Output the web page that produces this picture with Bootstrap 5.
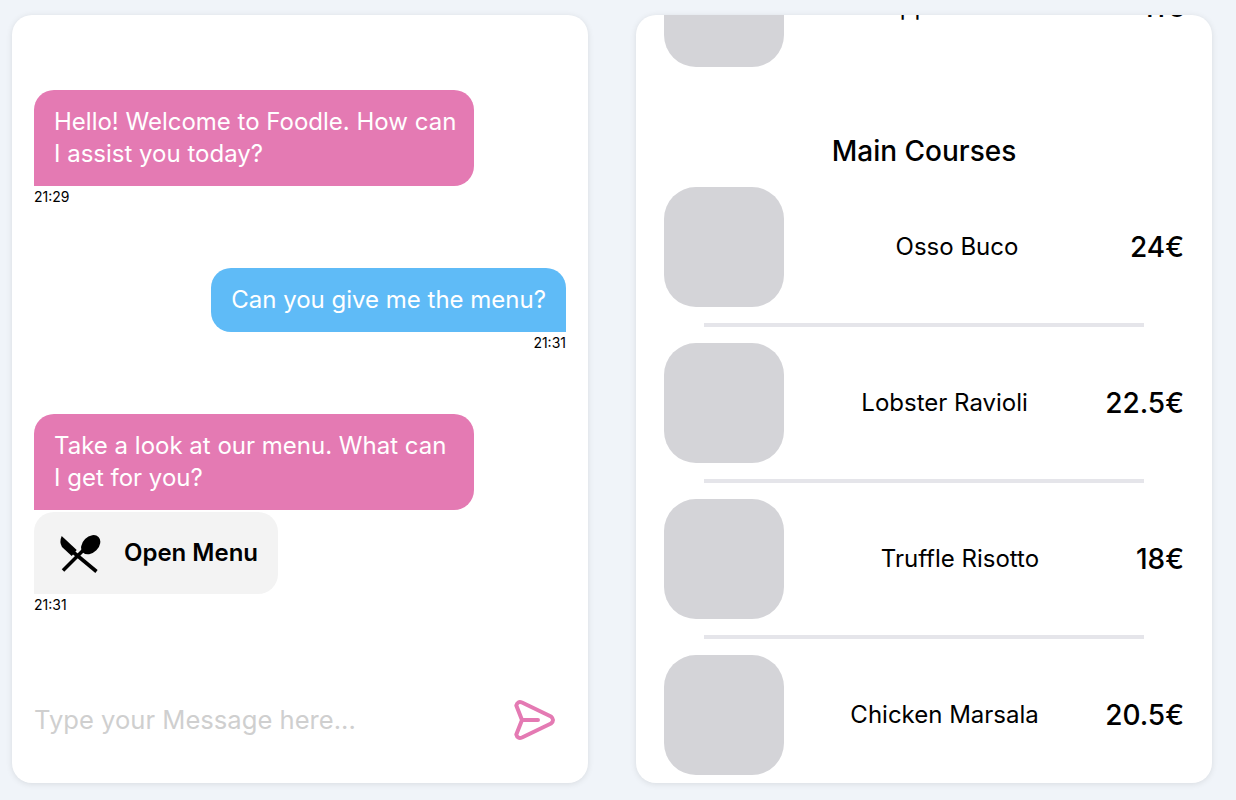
<!DOCTYPE html>
<html lang="en">
<head>
    <meta charset="UTF-8">
    <meta name="viewport" content="width=device-width, initial-scale=1.0">
    <title>Foodle</title>
    <link href="https://cdn.jsdelivr.net/npm/bootstrap@5.3.0/dist/css/bootstrap.min.css" rel="stylesheet">
    <style>
        body {
            background-color: #f0f4f9;
            font-family: Inter, "Liberation Sans", sans-serif;
            color: #000;
            height: 800px;
            overflow: hidden;
        }

        /* Two panels */
        .page-wrap {
            padding: 15px 24px 17px 12px;
            gap: 48px;
            height: 800px;
        }
        .panel {
            width: 576px;
            height: 768px;
            background: #fff;
            border-radius: 20px;
            box-shadow: 0 1px 6px rgba(0, 0, 0, 0.1);
            overflow: hidden;
        }

        /* Chat */
        .chat-list {
            padding: 75px 22px 0 22px;
        }
        .bubble {
            font-size: 24px;
            line-height: 32px;
            color: #fff;
            padding: 16px 20px;
            border-radius: 20px;
        }
        .bubble-bot {
            width: 440px;
            padding-right: 16px;
            background: #e47ab3;
            border-bottom-left-radius: 0;
        }
        .bubble-user {
            background: #5fbbf7;
            border-bottom-right-radius: 0;
        }
        .chat-time {
            font-size: 14px;
            line-height: 22px;
        }
        .chat-gap { margin-bottom: 60px; }
        .menu-btn {
            width: 244px;
            height: 82px;
            margin-top: 2px;
            padding: 0 20px 0 24px;
            gap: 22px;
            background: #f3f3f3;
            border-radius: 20px 20px 20px 0;
            font-size: 24px;
            font-weight: 600;
        }
        .msg-row {
            height: 96px;
            padding: 0 32px 0 22px;
            margin-top: auto;
            margin-bottom: 15px;
        }
        .msg-input {
            border: 0;
            outline: 0;
            padding: 0;
            font-size: 25.6px;
            font-family: inherit;
            color: #000;
            background: transparent;
        }
        .msg-input::placeholder {
            color: #cfcfcf;
            opacity: 1;
        }

        /* Menu */
        .menu-scroll {
            height: 100%;
            overflow: hidden;
            padding: 0 28px;
        }
        .menu-title {
            font-size: 28px;
            line-height: 40px;
            font-weight: 500;
            text-align: center;
            margin: 64px 0 16px;
        }
        .dish {
            height: 120px;
        }
        .dish-img {
            width: 120px;
            height: 120px;
            flex: 0 0 120px;
            background: #d4d4d8;
            border-radius: 32px;
        }
        .dish-name {
            font-size: 24px;
            line-height: 32px;
        }
        .dish-price {
            font-size: 28px;
            line-height: 36px;
            font-weight: 500;
        }
        .dish-line {
            height: 4px;
            width: 440px;
            margin: 16px 0 16px 40px;
            background: #e5e5ea;
        }
    </style>
</head>
<body>

    <div class="d-flex page-wrap">

        <!-- Chat -->
        <div class="panel d-flex flex-column">
            <div class="chat-list d-flex flex-column">
                <div class="bubble bubble-bot">Hello! Welcome to Foodle. How can I assist you today?</div>
                <div class="chat-time chat-gap">21:29</div>

                <div class="align-self-end d-flex flex-column align-items-end">
                    <div class="bubble bubble-user">Can you give me the menu?</div>
                    <div class="chat-time chat-gap">21:31</div>
                </div>

                <div class="bubble bubble-bot">Take a look at our menu. What can I get for you?</div>
                <div class="menu-btn d-flex align-items-center">
                    <svg class="flex-shrink-0" width="44" height="44" viewBox="0 0 44 44" aria-hidden="true">
                        <path d="M3.700 5 L18.700 19 L13.700 25 L4 16 Q1 11 3.700 5Z" fill="#000"/>
                        <path d="M15 21 L38.500 40.500" stroke="#000" stroke-width="3.600" fill="none"/>
                        <path d="M5 39.500 L26 18.500" stroke="#000" stroke-width="3.600" fill="none"/>
                        <ellipse cx="32.700" cy="13.700" rx="8" ry="11" transform="rotate(45 32.700 13.700)" fill="#000"/>
                    </svg>
                    <span class="text-nowrap">Open Menu</span>
                </div>
                <div class="chat-time">21:31</div>
            </div>

            <div class="msg-row d-flex align-items-center justify-content-between">
                <input class="msg-input flex-grow-1" type="text" placeholder="Type your Message here...">
                <svg width="44" height="44" viewBox="0 0 44 44" aria-hidden="true">
                    <path d="M4.300 7.500 Q5.500 2.800 10 4.500 L39 18.500 Q43 22 39 25.500 L10 39.500 Q5.500 41.200 4.300 36.500 L10 22 Z M10 22 H26" fill="none" stroke="#e47ab3" stroke-width="4" stroke-linecap="round" stroke-linejoin="round"/>
                </svg>
            </div>
        </div>

        <!-- Menu -->
        <div class="panel">
            <div class="menu-scroll" id="menuScroll">
                <div class="dish d-flex align-items-center justify-content-between">
                    <div class="dish-img"></div>
                    <div class="dish-name">Apple Crostini</div>
                    <div class="dish-price">11€</div>
                </div>

                <div class="menu-title">Main Courses</div>

                <div class="dish d-flex align-items-center justify-content-between">
                    <div class="dish-img"></div>
                    <div class="dish-name">Osso Buco</div>
                    <div class="dish-price">24€</div>
                </div>
                <div class="dish-line"></div>
                <div class="dish d-flex align-items-center justify-content-between">
                    <div class="dish-img"></div>
                    <div class="dish-name">Lobster Ravioli</div>
                    <div class="dish-price">22.5€</div>
                </div>
                <div class="dish-line"></div>
                <div class="dish d-flex align-items-center justify-content-between">
                    <div class="dish-img"></div>
                    <div class="dish-name">Truffle Risotto</div>
                    <div class="dish-price">18€</div>
                </div>
                <div class="dish-line"></div>
                <div class="dish d-flex align-items-center justify-content-between">
                    <div class="dish-img"></div>
                    <div class="dish-name">Chicken Marsala</div>
                    <div class="dish-price">20.5€</div>
                </div>
                <div class="dish-line"></div>
            </div>
        </div>
    </div>

    <script>
        // Menu list sits scrolled a bit down, like in the app
        document.getElementById('menuScroll').scrollTop = 68;
    </script>
    <script src="https://cdn.jsdelivr.net/npm/bootstrap@5.3.0/dist/js/bootstrap.bundle.min.js"></script>
</body>
</html>
